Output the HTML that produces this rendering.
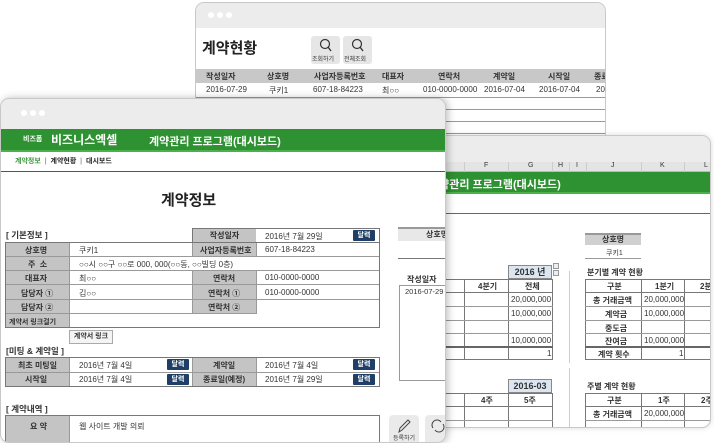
<!DOCTYPE html>
<html><head><meta charset="utf-8"><style>
*{margin:0;padding:0;box-sizing:border-box}
body{width:714px;height:442px;overflow:hidden;background:#fff;position:relative;font-family:"Liberation Sans","Noto Sans CJK KR",sans-serif;color:#333}
.a{position:absolute}
.win{position:absolute;background:#fff;border:1px solid #c8c8c8;border-radius:9px;overflow:hidden}
.bar{position:absolute;left:0;right:0;top:0;background:#ececec}
.dots{position:absolute;left:22px;top:9px;font-size:7px;color:#fff;letter-spacing:1px}
.dot{display:inline-block;width:6px;height:6px;border-radius:50%;background:#fff;margin-right:3px}
.t{position:absolute;font-size:8px;white-space:nowrap}
.g{background:#c4c4c4;font-weight:bold}
.btn{position:absolute;background:#1f3f66;color:#fff;font-size:7px;font-weight:bold;text-align:center;line-height:11px;width:22px;height:11px;border-radius:1px}
.hl{position:absolute;height:1px;background:#999}
.vl{position:absolute;width:1px;background:#999}
</style></head><body>

<div class="win" style="left:195px;top:2px;width:411px;height:140px;border-radius:9px 9px 0 0">
 <div class="bar" style="height:25px"><div class="dots" style="left:12px"><span class="dot"></span><span class="dot"></span><span class="dot"></span></div></div>
 <div class="t" style="left:6px;top:34px;font-size:15px;font-weight:bold;color:#222">계약현황</div>
 <div class="a" style="left:115px;top:33px;width:29px;height:28px;background:#e6e6e6;border-radius:3px"></div>
 <div class="a" style="left:147px;top:33px;width:29px;height:28px;background:#e6e6e6;border-radius:3px"></div>
 <svg class="a" style="left:120px;top:35px" width="20" height="14"><circle cx="9" cy="6" r="4.5" fill="none" stroke="#333" stroke-width="1.2"/><line x1="12" y1="9" x2="15" y2="13" stroke="#333" stroke-width="1.4"/></svg>
 <svg class="a" style="left:152px;top:35px" width="20" height="14"><circle cx="9" cy="6" r="4.5" fill="none" stroke="#333" stroke-width="1.2"/><line x1="12" y1="9" x2="15" y2="13" stroke="#333" stroke-width="1.4"/></svg>
 <div class="t" style="left:116px;top:51px;font-size:6px">조회하기</div>
 <div class="t" style="left:148px;top:51px;font-size:6px">전체조회</div>
 <div class="a" style="left:0;top:66px;width:411px;height:14px;background:#c8c8c8"></div>
 <div class="t" style="left:10px;top:68px;font-weight:bold">작성일자</div>
 <div class="t" style="left:71px;top:68px;font-weight:bold">상호명</div>
 <div class="t" style="left:118px;top:68px;font-weight:bold">사업자등록번호</div>
 <div class="t" style="left:186px;top:68px;font-weight:bold">대표자</div>
 <div class="t" style="left:242px;top:68px;font-weight:bold">연락처</div>
 <div class="t" style="left:297px;top:68px;font-weight:bold">계약일</div>
 <div class="t" style="left:352px;top:68px;font-weight:bold">시작일</div>
 <div class="t" style="left:398px;top:68px;font-weight:bold">종료</div>
 <div class="t" style="left:10px;top:82px">2016-07-29</div>
 <div class="t" style="left:73px;top:82px">쿠키1</div>
 <div class="t" style="left:117px;top:82px">607-18-84223</div>
 <div class="t" style="left:186px;top:82px">최○○</div>
 <div class="t" style="left:227px;top:82px">010-0000-0000</div>
 <div class="t" style="left:288px;top:82px">2016-07-04</div>
 <div class="t" style="left:343px;top:82px">2016-07-04</div>
 <div class="t" style="left:400px;top:82px">201</div>
 <div class="hl" style="left:0;right:0;top:94px"></div>
 <div class="hl" style="left:0;right:0;top:106px"></div>
 <div class="hl" style="left:0;right:0;top:118px"></div>
 <div class="hl" style="left:0;right:0;top:130px"></div>
</div>

<div class="win" style="left:400px;top:135px;width:311px;height:293px;box-shadow:0 0 6px rgba(0,0,0,.15)">
 <div class="bar" style="height:26px"></div>
 <div class="a" style="left:0;top:26px;width:311px;height:10px;background:#e4e4e4;border-bottom:1px solid #bbb"></div>
 <div class="vl" style="left:63px;top:26px;height:10px;background:#ccc"></div>
 <div class="vl" style="left:107px;top:26px;height:10px;background:#ccc"></div>
 <div class="vl" style="left:151px;top:26px;height:10px;background:#ccc"></div>
 <div class="vl" style="left:168px;top:26px;height:10px;background:#ccc"></div>
 <div class="vl" style="left:185px;top:26px;height:10px;background:#ccc"></div>
 <div class="vl" style="left:240px;top:26px;height:10px;background:#ccc"></div>
 <div class="vl" style="left:283px;top:26px;height:10px;background:#ccc"></div>
 <div class="t" style="left:83px;top:26px;font-size:7px">F</div>
 <div class="t" style="left:127px;top:26px;font-size:7px">G</div>
 <div class="t" style="left:157px;top:26px;font-size:7px">H</div>
 <div class="t" style="left:175px;top:26px;font-size:7px">I</div>
 <div class="t" style="left:210px;top:26px;font-size:7px">J</div>
 <div class="t" style="left:259px;top:26px;font-size:7px">K</div>
 <div class="t" style="left:303px;top:26px;font-size:7px">L</div>
 <div class="a" style="left:0;top:36px;width:311px;height:22px;background:#2e9132;border-bottom:2px solid #49b24a"></div>
 <div class="t" style="left:28px;top:40px;font-size:11px;font-weight:bold;color:#fff">계약관리 프로그램(대시보드)</div>
 <div class="hl" style="left:0;right:0;top:77px;background:#666"></div>
 <div class="a" style="left:184px;top:97px;width:56px;height:12px;background:#d0d0d0;border-top:2px solid #999;font-size:8px;font-weight:bold;text-align:center;line-height:10px">상호명</div>
 <div class="t" style="left:205px;top:112px;font-size:7px">쿠키1</div>
 <div class="hl" style="left:184px;top:122px;width:56px"></div>
 <div class="a" style="left:107px;top:129px;width:44px;height:14px;background:#dce6f1;border:1px solid #888;font-size:9px;font-weight:bold;text-align:center;line-height:12px">2016 년</div>
 <div class="a" style="left:152px;top:127px;width:6px;height:6px;border:1px solid #999;background:#eee"></div>
 <div class="a" style="left:152px;top:134px;width:6px;height:6px;border:1px solid #999;background:#eee"></div>
 <div class="t" style="left:186px;top:131px;font-weight:bold">분기별 계약 현황</div>
 <div class="vl" style="left:168px;top:135px;height:92px;background:#ccc"></div>
 <div class="a" style="left:0;top:143px;width:152px;height:81px;border:1px solid #777;border-left:none"></div>
 <div class="vl" style="left:63px;top:143px;height:81px;background:#777"></div>
 <div class="vl" style="left:107px;top:143px;height:81px;background:#777"></div>
 <div class="hl" style="left:0;width:152px;top:156px;background:#777"></div>
 <div class="hl" style="left:0;width:152px;top:170px"></div>
 <div class="hl" style="left:0;width:152px;top:184px"></div>
 <div class="hl" style="left:0;width:152px;top:197px"></div>
 <div class="hl" style="left:0;width:152px;top:210px;height:2px;background:#666"></div>
 <div class="t" style="left:77px;top:145px;font-weight:bold">4분기</div>
 <div class="t" style="left:124px;top:145px;font-weight:bold">전체</div>
 <div class="t" style="left:110px;top:159px">20,000,000</div>
 <div class="t" style="left:110px;top:173px">10,000,000</div>
 <div class="t" style="left:110px;top:200px">10,000,000</div>
 <div class="t" style="left:146px;top:213px">1</div>
 <div class="a" style="left:184px;top:143px;width:130px;height:81px;border:1px solid #777"></div>
 <div class="vl" style="left:240px;top:143px;height:81px;background:#777"></div>
 <div class="vl" style="left:283px;top:143px;height:81px;background:#777"></div>
 <div class="hl" style="left:184px;width:130px;top:156px;background:#777"></div>
 <div class="hl" style="left:184px;width:130px;top:170px"></div>
 <div class="hl" style="left:184px;width:130px;top:184px"></div>
 <div class="hl" style="left:184px;width:130px;top:197px"></div>
 <div class="hl" style="left:184px;width:130px;top:210px;height:2px;background:#666"></div>
 <div class="t" style="left:206px;top:145px;font-weight:bold">구분</div>
 <div class="t" style="left:254px;top:145px;font-weight:bold">1분기</div>
 <div class="t" style="left:299px;top:145px;font-weight:bold">2분기</div>
 <div class="t" style="left:192px;top:159px;font-weight:bold">총 거래금액</div>
 <div class="t" style="left:204px;top:173px;font-weight:bold">계약금</div>
 <div class="t" style="left:204px;top:187px;font-weight:bold">중도금</div>
 <div class="t" style="left:204px;top:200px;font-weight:bold">잔여금</div>
 <div class="t" style="left:197px;top:213px;font-weight:bold">계약 횟수</div>
 <div class="t" style="left:243px;top:159px">20,000,000</div>
 <div class="t" style="left:243px;top:173px">10,000,000</div>
 <div class="t" style="left:243px;top:200px">10,000,000</div>
 <div class="t" style="left:278px;top:213px">1</div>
 <div class="vl" style="left:168px;top:232px;height:61px;background:#ccc"></div>
 <div class="a" style="left:107px;top:243px;width:44px;height:14px;background:#dce6f1;border:1px solid #888;font-size:9px;font-weight:bold;text-align:center;line-height:12px">2016-03</div>
 <div class="t" style="left:186px;top:245px;font-weight:bold">주별 계약 현황</div>
 <div class="a" style="left:0;top:257px;width:152px;height:40px;border:1px solid #777;border-left:none"></div>
 <div class="vl" style="left:63px;top:257px;height:40px;background:#777"></div>
 <div class="vl" style="left:107px;top:257px;height:40px;background:#777"></div>
 <div class="hl" style="left:0;width:152px;top:270px;background:#777"></div>
 <div class="hl" style="left:0;width:152px;top:284px"></div>
 <div class="t" style="left:80px;top:259px;font-weight:bold">4주</div>
 <div class="t" style="left:123px;top:259px;font-weight:bold">5주</div>
 <div class="a" style="left:184px;top:257px;width:130px;height:40px;border:1px solid #777"></div>
 <div class="vl" style="left:240px;top:257px;height:40px;background:#777"></div>
 <div class="vl" style="left:283px;top:257px;height:40px;background:#777"></div>
 <div class="hl" style="left:184px;width:130px;top:270px;background:#777"></div>
 <div class="hl" style="left:184px;width:130px;top:284px"></div>
 <div class="t" style="left:206px;top:259px;font-weight:bold">구분</div>
 <div class="t" style="left:257px;top:259px;font-weight:bold">1주</div>
 <div class="t" style="left:300px;top:259px;font-weight:bold">2주</div>
 <div class="t" style="left:192px;top:273px;font-weight:bold">총 거래금액</div>
 <div class="t" style="left:243px;top:273px">20,000,000</div>
</div>

<div class="win" style="left:0;top:98px;width:446px;height:345px;box-shadow:2px 0 8px rgba(0,0,0,.25)">
 <div class="bar" style="height:30px"><div class="dots" style="left:20px;top:11px"><span class="dot"></span><span class="dot"></span><span class="dot"></span></div></div>
 <div class="a" style="left:0;top:30px;width:446px;height:23px;background:#2e9132;border-bottom:2px solid #49b24a"></div>
 <div class="t" style="left:22px;top:35px;font-size:7px;color:#fff;font-weight:bold">비즈폼</div>
 <div class="t" style="left:50px;top:32px;font-size:12px;color:#fff;font-weight:bold">비즈니스엑셀</div>
 <div class="t" style="left:148px;top:34px;font-size:11px;color:#fff;font-weight:bold">계약관리 프로그램(대시보드)</div>
 <div class="t" style="left:14px;top:57px;font-size:7px;color:#3a9a3a;font-weight:bold">계약정보 &nbsp;<span style="color:#999">|</span>&nbsp; <span style="color:#222">계약현황</span> &nbsp;<span style="color:#999">|</span>&nbsp; <span style="color:#222">대시보드</span></div>
 <div class="hl" style="left:0;right:0;top:72px;background:#555"></div>
 <div class="t" style="left:160px;top:90px;font-size:15px;font-weight:bold;color:#222">계약정보</div>

 <div class="t" style="left:5px;top:130px;font-size:8.5px;font-weight:bold">[ 기본정보 ]</div>
 <div class="a" style="left:191px;top:129px;width:188px;height:15px;border:1px solid #777;border-bottom:none"></div>
 <div class="a g" style="left:192px;top:130px;width:63px;height:14px;font-size:8px;text-align:center;line-height:14px">작성일자</div>
 <div class="t" style="left:264px;top:132px">2016년 7월 29일</div>
 <div class="btn" style="left:352px;top:131px">달력</div>
 <div class="a" style="left:4px;top:143px;width:375px;height:86px;border:1px solid #777"></div>
 <div class="a g" style="left:5px;top:144px;width:63px;height:84px"></div>
 <div class="a g" style="left:192px;top:144px;width:63px;height:14px"></div>
 <div class="a g" style="left:192px;top:171px;width:63px;height:44px"></div>
 <div class="hl" style="left:5px;width:373px;top:157px"></div>
 <div class="hl" style="left:5px;width:373px;top:171px"></div>
 <div class="hl" style="left:5px;width:373px;top:185px"></div>
 <div class="hl" style="left:5px;width:373px;top:200px"></div>
 <div class="hl" style="left:5px;width:250px;top:214px"></div>
 <div class="vl" style="left:68px;top:144px;height:84px"></div>
 <div class="vl" style="left:191px;top:144px;height:14px"></div>
 <div class="vl" style="left:191px;top:171px;height:44px"></div>
 <div class="vl" style="left:255px;top:144px;height:14px"></div>
 <div class="vl" style="left:255px;top:171px;height:44px"></div>
 <div class="t" style="left:24px;top:146px;font-weight:bold">상호명</div>
 <div class="t" style="left:78px;top:146px">쿠키1</div>
 <div class="t" style="left:199px;top:146px;font-weight:bold">사업자등록번호</div>
 <div class="t" style="left:264px;top:146px">607-18-84223</div>
 <div class="t" style="left:27px;top:160px;font-weight:bold">주 &nbsp;소</div>
 <div class="t" style="left:78px;top:160px">○○시 ○○구 ○○로 000, 000(○○동, ○○빌딩 0층)</div>
 <div class="t" style="left:24px;top:174px;font-weight:bold">대표자</div>
 <div class="t" style="left:78px;top:174px">최○○</div>
 <div class="t" style="left:212px;top:174px;font-weight:bold">연락처</div>
 <div class="t" style="left:264px;top:174px">010-0000-0000</div>
 <div class="t" style="left:20px;top:189px;font-weight:bold">담당자 ①</div>
 <div class="t" style="left:78px;top:189px">김○○</div>
 <div class="t" style="left:207px;top:189px;font-weight:bold">연락처 ①</div>
 <div class="t" style="left:264px;top:189px">010-0000-0000</div>
 <div class="t" style="left:20px;top:203px;font-weight:bold">담당자 ②</div>
 <div class="t" style="left:207px;top:203px;font-weight:bold">연락처 ②</div>
 <div class="t" style="left:8px;top:218px;font-weight:bold;font-size:7px">계약서 링크걸기</div>
 <div class="a" style="left:68px;top:231px;width:44px;height:14px;border:1px solid #aaa;background:#f4f4f4;font-size:7px;font-weight:bold;text-align:center;line-height:12px">계약서 링크</div>

 <div class="t" style="left:5px;top:246px;font-size:8.5px;font-weight:bold">[미팅 &amp; 계약일 ]</div>
 <div class="a" style="left:4px;top:258px;width:375px;height:30px;border:1px solid #777"></div>
 <div class="a g" style="left:5px;top:259px;width:63px;height:28px"></div>
 <div class="a g" style="left:192px;top:259px;width:63px;height:28px"></div>
 <div class="hl" style="left:5px;width:373px;top:273px"></div>
 <div class="vl" style="left:68px;top:259px;height:28px"></div>
 <div class="vl" style="left:191px;top:259px;height:28px"></div>
 <div class="vl" style="left:255px;top:259px;height:28px"></div>
 <div class="t" style="left:17px;top:261px;font-weight:bold">최초 미팅일</div>
 <div class="t" style="left:78px;top:261px">2016년 7월 4일</div>
 <div class="btn" style="left:166px;top:260px">달력</div>
 <div class="t" style="left:212px;top:261px;font-weight:bold">계약일</div>
 <div class="t" style="left:264px;top:261px">2016년 7월 4일</div>
 <div class="btn" style="left:352px;top:260px">달력</div>
 <div class="t" style="left:24px;top:275px;font-weight:bold">시작일</div>
 <div class="t" style="left:78px;top:275px">2016년 7월 4일</div>
 <div class="btn" style="left:166px;top:275px">달력</div>
 <div class="t" style="left:202px;top:275px;font-weight:bold">종료일(예정)</div>
 <div class="t" style="left:264px;top:275px">2016년 7월 29일</div>
 <div class="btn" style="left:352px;top:275px">달력</div>

 <div class="t" style="left:5px;top:304px;font-size:8.5px;font-weight:bold">[ 계약내역 ]</div>
 <div class="a" style="left:4px;top:316px;width:375px;height:40px;border:1px solid #777"></div>
 <div class="a g" style="left:5px;top:317px;width:63px;height:30px"></div>
 <div class="vl" style="left:68px;top:317px;height:30px"></div>
 <div class="t" style="left:29px;top:322px;font-weight:bold">요 약</div>
 <div class="t" style="left:78px;top:322px">웹 사이트 개발 의뢰</div>

 <div class="a" style="left:397px;top:128px;width:49px;height:14px;background:#e8e8e8;border-top:2px solid #999"></div>
 <div class="t" style="left:425px;top:130px;font-weight:bold">상호명</div>
 <div class="hl" style="left:397px;width:49px;top:159px;background:#777"></div>
 <div class="t" style="left:406px;top:175px;font-weight:bold">작성일자</div>
 <div class="a" style="left:398px;top:186px;width:50px;height:96px;border:1px solid #999"></div>
 <div class="t" style="left:404px;top:188px;font-size:7.5px">2016-07-29</div>
 <div class="a" style="left:388px;top:316px;width:30px;height:30px;background:#eaeaea;border-radius:4px"></div>
 <svg class="a" style="left:394px;top:319px" width="18" height="16"><path d="M4 14 L5 10 L13 2 L15 4 L7 12 Z" fill="none" stroke="#444" stroke-width="1"/></svg>
 <div class="t" style="left:392px;top:334px;font-size:6px">등록하기</div>
 <div class="a" style="left:424px;top:316px;width:26px;height:30px;background:#eaeaea;border-radius:4px"></div>
 <svg class="a" style="left:428px;top:320px" width="18" height="14"><path d="M4 9 A5 5 0 0 1 12 3 M14 5 A5 5 0 0 1 6 11" fill="none" stroke="#444" stroke-width="1"/></svg>
</div>
</body></html>
